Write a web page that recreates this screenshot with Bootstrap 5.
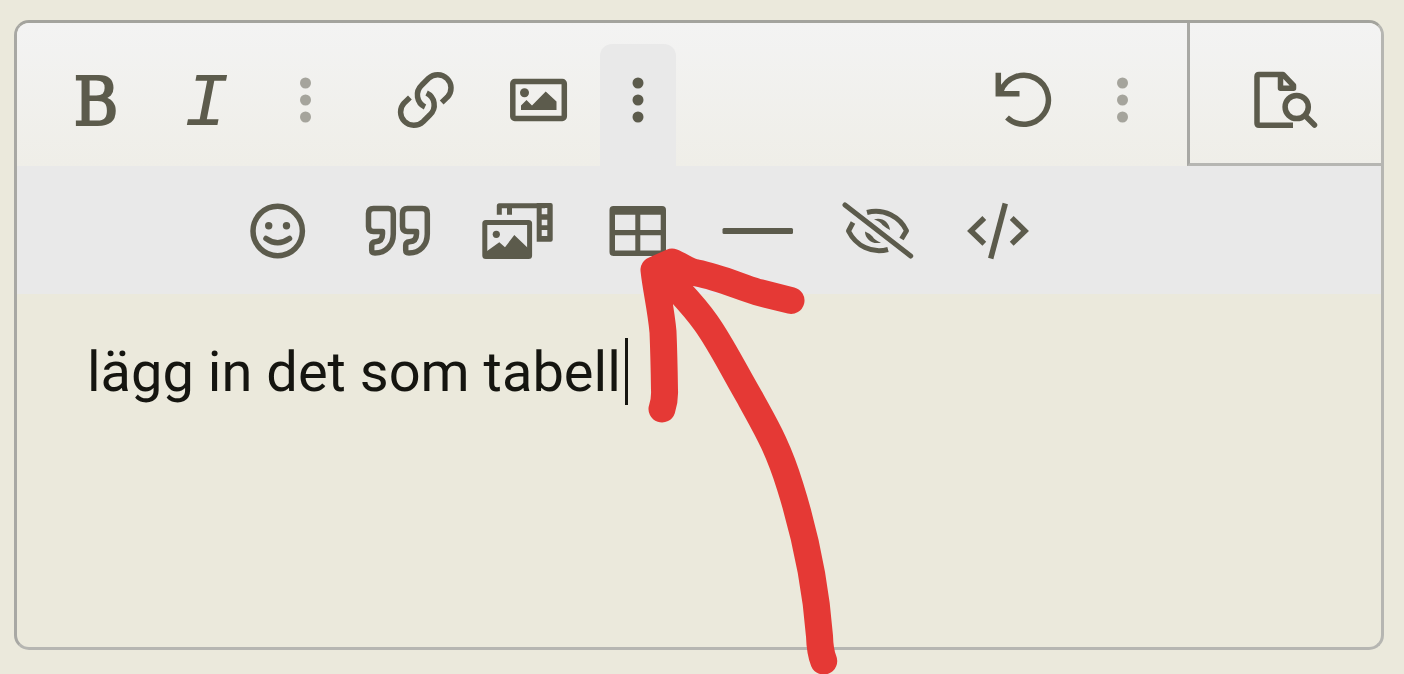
<!DOCTYPE html>
<html lang="sv">
<head>
<meta charset="utf-8">
<meta name="viewport" content="width=device-width, initial-scale=1">
<title>Redigerare</title>
<link href="https://cdn.jsdelivr.net/npm/bootstrap@5.3.0/dist/css/bootstrap.min.css" rel="stylesheet">
<style>
body { background: #ebe9dc; padding: 20px 20px 24px 14px; font-family: Roboto, "Liberation Sans", sans-serif; }
.editor { border: 3px solid #b6b6b2; border-top-color: #a3a39d; border-left-color: #a8a8a4; border-radius: 15px; }
.toolbar-main { background: linear-gradient(#f3f3f3, #efeee8); border-radius: 12px 12px 0 0; height: 143px; }
.tool-group { gap: 3px; }
.tool-start { padding-left: 24px; }
.tool-insert { padding-left: 27px; }
.tool-end { padding-right: 27px; }
.toolbar-more { background: #e9e9e9; padding-left: 200px; }
.tool { --bs-btn-padding-x: 0; --bs-btn-padding-y: 0; --bs-btn-border-width: 0; --bs-btn-border-radius: 0; --bs-btn-color: #5c5b4c; --bs-btn-hover-color: #5c5b4c; --bs-btn-active-color: #5c5b4c; width: 110px; height: 122px; line-height: 1; }
.tool svg, .ink { fill: none; stroke: currentColor; stroke-width: 5.5; stroke-linejoin: round; }
.tool svg { width: 76px; height: 80px; display: block; margin: 0 auto; }
.tool .solid { fill: currentColor; stroke: none; }
.tool-dots { width: 76px; --bs-btn-color: #a5a49c; }
.tool-dots.active { --bs-btn-active-bg: #e9e9e9; --bs-btn-border-radius: 12px 12px 0 0; }
.toolbar-more .tool { width: 120px; height: 128px; }
.glyph-b { font: 68px "DejaVu Serif Condensed", "DejaVu Serif", serif; padding-bottom: 8px; -webkit-text-stroke: 2px currentColor; }
.glyph-i { font: italic 76px "Liberation Mono", monospace; padding-right: 6px; }
.preview { width: 194px; height: 143px; border-left: 3px solid #a8a8a4; border-bottom: 3px solid #b6b6b2; border-radius: 0 12px 0 0; padding-top: 21px; }
.preview .tool { height: 100px; }
.message { height: 353px; padding: 44px 70px; background: transparent; border: 0; color: #151510; font-size: 56px; line-height: 68px; resize: none; outline: 0; overflow: hidden; }
.caret { left: 608px; top: 44px; width: 3px; height: 67px; background: #151510; }
.ink { left: 620px; top: 220px; width: 230px; height: 434px; color: #e53935; stroke-width: 27; stroke-linecap: round; pointer-events: none; }
</style>
</head>
<body>
<main class="editor position-relative">
  <div class="toolbar-main d-flex align-items-end" role="toolbar" aria-label="Formatering">
    <div class="tool-group tool-start d-flex">
      <button type="button" class="btn tool glyph-b" aria-label="Fet">B</button>
      <button type="button" class="btn tool glyph-i" aria-label="Kursiv">I</button>
      <button type="button" class="btn tool tool-dots" aria-label="Mer text">
        <svg viewBox="267 65 76 80"><g class="solid"><circle cx="305.5" cy="83" r="5.5"/><circle cx="305.5" cy="100" r="5.5"/><circle cx="305.5" cy="117" r="5.5"/></g></svg>
      </button>
    </div>
    <div class="tool-group tool-insert d-flex ms-1">
      <button type="button" class="btn tool" aria-label="Länk">
        <svg viewBox="391 65 76 80"><path d="M441.7 102.5L447.4 97.1A13.3 13.3 0 0 0 428.6 78.3L421.6 85.3A13.3 13.3 0 0 0 425 107M409.9 97.5L404.2 102.9A13.3 13.3 0 0 0 423 121.7L430 114.7A13.3 13.3 0 0 0 426.6 93"/></svg>
      </button>
      <button type="button" class="btn tool" aria-label="Bild">
        <svg viewBox="504 65 76 80"><rect x="512.8" y="81.5" width="51.5" height="37" rx="2"/><g class="solid"><circle cx="524.5" cy="92.7" r="4.5"/><path d="M521 110V105.5L526.5 100L532 105.5L545.7 91.5L556.5 101.5V110Z"/></g></svg>
      </button>
      <button type="button" class="btn tool tool-dots active" aria-label="Fler verktyg" aria-expanded="true">
        <svg viewBox="600 65 76 80"><g class="solid"><circle cx="638" cy="83" r="5.5"/><circle cx="638" cy="100" r="5.5"/><circle cx="638" cy="117" r="5.5"/></g></svg>
      </button>
    </div>
    <div class="tool-group tool-end d-flex ms-auto">
      <button type="button" class="btn tool" aria-label="Ångra">
        <svg viewBox="988 65 76 80"><path d="M1007 117.5A24.5 24.5 0 1 0 1001 91"/><path d="M998.3 72.7V93.7H1019.5" stroke-linejoin="miter"/></svg>
      </button>
      <button type="button" class="btn tool tool-dots" aria-label="Mer">
        <svg viewBox="1084 65 76 80"><g class="solid"><circle cx="1122.5" cy="83" r="5.5"/><circle cx="1122.5" cy="100" r="5.5"/><circle cx="1122.5" cy="117" r="5.5"/></g></svg>
      </button>
    </div>
    <div class="preview">
      <button type="button" class="btn tool w-100" aria-label="Förhandsgranska">
        <svg viewBox="1247 54 76 80"><path d="M1292 125.2H1258Q1256 125.2 1256 123.2V76.5Q1256 74.5 1258 74.5H1282L1292.5 85.5V88.3H1279.5V75"/><circle cx="1295.7" cy="107" r="11.6"/><path d="M1304 115.5L1313.5 125" stroke-linecap="round"/></svg>
      </button>
    </div>
  </div>

  <div class="toolbar-more d-flex" role="toolbar" aria-label="Infoga">
    <button type="button" class="btn tool" aria-label="Smilies">
      <svg viewBox="239 190 76 80"><circle cx="277.7" cy="231" r="24.7"/><path d="M266 238.5Q277.7 247 289.5 238.5" stroke-linecap="round"/><g class="solid"><circle cx="268.7" cy="225.7" r="3.7"/><circle cx="286.5" cy="225.7" r="3.7"/></g></svg>
    </button>
    <button type="button" class="btn tool" aria-label="Citat">
      <svg viewBox="359 190 76 80"><path id="quote" d="M393.3 213.5Q393.3 208.5 388.3 208.5H373.5Q368.5 208.5 368.5 213.5V226.5Q368.5 231.5 373.5 231.5H382.5V234Q382.5 241.5 375.5 241.7Q371.7 242 371.7 245.5V250Q371.7 253 375 253C386 253 393.3 245 393.3 234Z"/><use href="#quote" x="34"/></svg>
    </button>
    <button type="button" class="btn tool" aria-label="Media">
      <svg viewBox="479 190 76 80"><path d="M499.3 214.7V205.7H545M509.5 205V214.7" stroke-width="5"/><path class="solid" fill-rule="evenodd" d="M536.7 203H550.7Q552.7 203 552.7 205V239.7Q552.7 241.7 550.7 241.7H536.7ZM541.7 208V214.3H547.3V208ZM541.7 219.7V225.3H547.3V219.7ZM541.7 230V236H547.3V230Z"/><rect x="484.8" y="222.5" width="44.8" height="34" rx="1" stroke-width="5"/><g class="solid"><circle cx="496.3" cy="234.3" r="3.6"/><path d="M485 252.5L499.3 242.3L505 247.3L514.3 235L530 250V257H485Z"/></g></svg>
    </button>
    <button type="button" class="btn tool" aria-label="Infoga tabell">
      <svg viewBox="599 190 76 80"><path class="solid" fill-rule="evenodd" d="M613.5 206H662Q666 206 666 210V252Q666 256 662 256H613.5Q609.5 256 609.5 252V210Q609.5 206 613.5 206ZM615 214.7V230H635.3V214.7ZM640.3 214.7V230H660.7V214.7ZM615 235.3V250.5H635.3V235.3ZM640.3 235.3V250.5H660.7V235.3Z"/></svg>
    </button>
    <button type="button" class="btn tool" aria-label="Horisontell linje">
      <svg viewBox="719 190 76 80"><rect class="solid" x="722.5" y="228" width="70.5" height="6" rx="1.5"/></svg>
    </button>
    <button type="button" class="btn tool" aria-label="Dold text">
      <svg viewBox="839 190 76 80"><path d="M867 212.5C884 208 900 217 906.5 230.7L901.5 239M853 222.5L848.5 231C856 246 872 254 888 249.5" stroke-width="5"/><path d="M845 205L910.7 256" stroke-linecap="round" stroke-width="5"/><path class="solid" d="M874 219.5C882 217 889 222 890 230Q886 228 882.5 225Q880 221 874 219.5ZM865 231.5Q869 233 872.5 236.5Q875 240.5 881 242.5C873 245 865 239.5 865 231.5Z"/></svg>
    </button>
    <button type="button" class="btn tool" aria-label="Kod">
      <svg viewBox="959 190 76 80"><path d="M984.3 218L971 230.9L984.3 243.8M1011.7 218L1025 230.9L1011.7 243.8" stroke-linejoin="miter"/><path d="M1005.3 203.5L990.7 258.5"/></svg>
    </button>
  </div>

  <div class="position-relative">
    <textarea class="message form-control-plaintext d-block w-100" aria-label="Meddelande" spellcheck="false">lägg in det som tabell</textarea>
    <span class="caret position-absolute"></span>
  </div>

  <svg class="ink position-absolute" viewBox="637 243 230 434" aria-hidden="true"><path d="M823.7 661Q820 652 819.5 636C816 590 807 540 790 486C777 444 764 424 750 398C732 367 721 344 706 323C695 307 681 293 672 283L654 270C656 289 661 309 663 332Q664 356 664.5 390Q665 400 662 409M654 270L672 262C682 266 689 272 697 273C718 277 738 286 757 292L791 300.5"/></svg>
</main>
<script src="https://cdn.jsdelivr.net/npm/bootstrap@5.3.0/dist/js/bootstrap.bundle.min.js"></script>
</body>
</html>
